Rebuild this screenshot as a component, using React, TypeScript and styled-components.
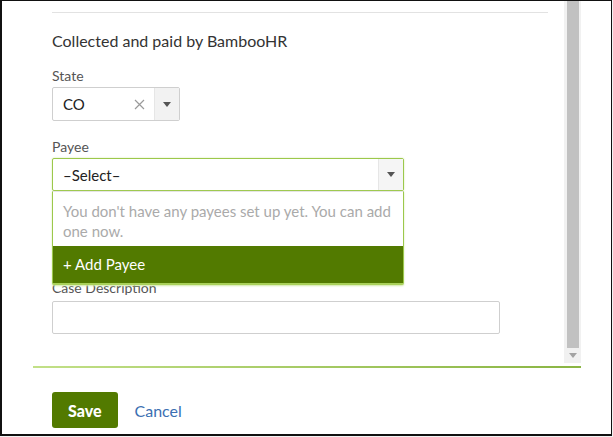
import React from 'react';
import styled, { createGlobalStyle } from 'styled-components';

const GlobalStyle = createGlobalStyle`
  html, body {
    margin: 0;
    padding: 0;
    background: #f2f2f2;
    font-family: Lato, 'Open Sans', sans-serif;
  }
  * {
    box-sizing: border-box;
  }
`;

const App = () => {
  return (
    <>
      <GlobalStyle />
      <Frame>
        <ScrollArea>
          <Content>
            <Divider />
            <Heading>Collected and paid by BambooHR</Heading>

            <Field $top={17}>
              <Label>State</Label>
              <Select $width={128}>
                <SelectValue>CO</SelectValue>
                <ClearButton>
                  <svg width="11" height="11" viewBox="0 0 11 11">
                    <path d="M1 1 L10 10 M10 1 L1 10" stroke="#9a9a9a" strokeWidth="1.2" />
                  </svg>
                </ClearButton>
                <ArrowBox $shade="#f2f2f2">
                  <Caret />
                </ArrowBox>
              </Select>
            </Field>

            <Field $top={17}>
              <Label>Payee</Label>
              <MenuAnchor>
                <Select $width={352} $open>
                  <SelectValue>–Select–</SelectValue>
                  <ArrowBox $shade="#f5f5f5">
                    <Caret />
                  </ArrowBox>
                </Select>
                <Menu>
                  <MenuMessage>
                    You don't have any payees set up yet. You can add one now.
                  </MenuMessage>
                  <AddItem>+ Add Payee</AddItem>
                </Menu>
              </MenuAnchor>
            </Field>

            <Field $top={88}>
              <Label>Case Description</Label>
              <TextInput />
            </Field>
          </Content>

          <Scrollbar>
            <Thumb />
            <ScrollArrow>
              <Caret $color="#a3a3a3" />
            </ScrollArrow>
          </Scrollbar>
        </ScrollArea>

        <FooterLine />

        <Footer>
          <SaveButton type="button">Save</SaveButton>
          <CancelLink>Cancel</CancelLink>
        </Footer>
      </Frame>
    </>
  );
};

const Frame = styled.div`
  display: flex;
  flex-direction: column;
  width: 612px;
  height: 436px;
  background: #ffffff;
  border: 1px solid #111;
  border-left-width: 2px;
  border-bottom-width: 2px;
  overflow: hidden;
`;

const ScrollArea = styled.div`
  display: flex;
  height: 362px;
`;

const Content = styled.div`
  flex: 1;
  padding: 11px 16px 0 50px;
`;

const Divider = styled.div`
  height: 1px;
  background: #e2e2e2;
`;

const Heading = styled.h2`
  margin: 18px 0 0;
  font-size: 16px;
  line-height: 19px;
  font-weight: 400;
  color: #333;
`;

const Field = styled.div<{ $top: number }>`
  display: flex;
  flex-direction: column;
  align-items: flex-start;
  margin-top: ${({ $top }) => $top}px;
`;

const Label = styled.label`
  font-size: 14px;
  line-height: 17px;
  color: #555;
  margin-bottom: 3px;
`;

const MenuAnchor = styled.div`
  position: relative;
`;

const Select = styled.div<{ $width: number; $open?: boolean }>`
  display: flex;
  align-items: stretch;
  width: ${({ $width }) => $width}px;
  height: ${({ $open }) => ($open ? 33 : 34)}px;
  border: 1px solid ${({ $open }) => ($open ? '#9cc84b' : '#cfcfcf')};
  border-radius: 2px;
  background: #fff;
  box-shadow: ${({ $open }) => ($open ? '0 0 2px #d2e8a8' : 'none')};
`;

const SelectValue = styled.span`
  flex: 1;
  display: flex;
  align-items: center;
  padding-left: 10px;
  font-size: 15px;
  color: #222;
`;

const ClearButton = styled.span`
  display: flex;
  align-items: center;
  padding-right: 9px;
`;

const ArrowBox = styled.span<{ $shade: string }>`
  display: flex;
  align-items: center;
  justify-content: center;
  width: 25px;
  background: ${({ $shade }) => $shade};
  border-left: 1px solid #e6e6e6;
`;

const Caret = styled.span<{ $color?: string }>`
  width: 0;
  height: 0;
  border-left: 4px solid transparent;
  border-right: 4px solid transparent;
  border-top: 5px solid ${({ $color }) => $color || '#555'};
`;

const Menu = styled.div`
  position: absolute;
  top: 100%;
  left: 0;
  width: 352px;
  background: #fff;
  border: 1px solid #9cc84b;
  border-top: 1px solid #e5e5e5;
  border-bottom: 2px solid #a9d15a;
  border-radius: 0 0 2px 2px;
  box-shadow: 0 1px 2px #d2e8a8;
  z-index: 2;
`;

const MenuMessage = styled.p`
  margin: 0;
  padding: 9px 10px 5px;
  font-size: 15px;
  line-height: 20px;
  color: #aaa;
`;

const AddItem = styled.div`
  height: 37px;
  line-height: 36px;
  padding-left: 10px;
  background: #527a00;
  color: #fff;
  font-size: 15px;
`;

const TextInput = styled.input`
  width: 448px;
  height: 33px;
  margin-top: 2px;
  border: 1px solid #cfcfcf;
  border-radius: 2px;
  outline: none;
  font: inherit;
`;

const Scrollbar = styled.div`
  display: flex;
  flex-direction: column;
  align-items: center;
  width: 17px;
  margin-right: 30px;
  background: #f1f1f1;
`;

const Thumb = styled.div`
  width: 12px;
  height: 347px;
  background: #c1c1c1;
`;

const ScrollArrow = styled.div`
  flex: 1;
  display: flex;
  align-items: center;
  justify-content: center;
`;

const FooterLine = styled.div`
  height: 2px;
  margin: 3px 30px 0 31px;
  background: linear-gradient(to right, #c2e087, #8ab543);
`;

const Footer = styled.div`
  display: flex;
  align-items: center;
  gap: 17px;
  padding: 24px 0 0 50px;
`;

const SaveButton = styled.button`
  height: 36px;
  padding: 0 16px;
  border: none;
  border-radius: 3px;
  background: #527a00;
  color: #fff;
  font-family: Lato, sans-serif;
  font-size: 16px;
  font-weight: 900;
  cursor: pointer;
`;

const CancelLink = styled.a`
  font-size: 16px;
  color: #3b6fb2;
  cursor: pointer;
`;

export default App;
